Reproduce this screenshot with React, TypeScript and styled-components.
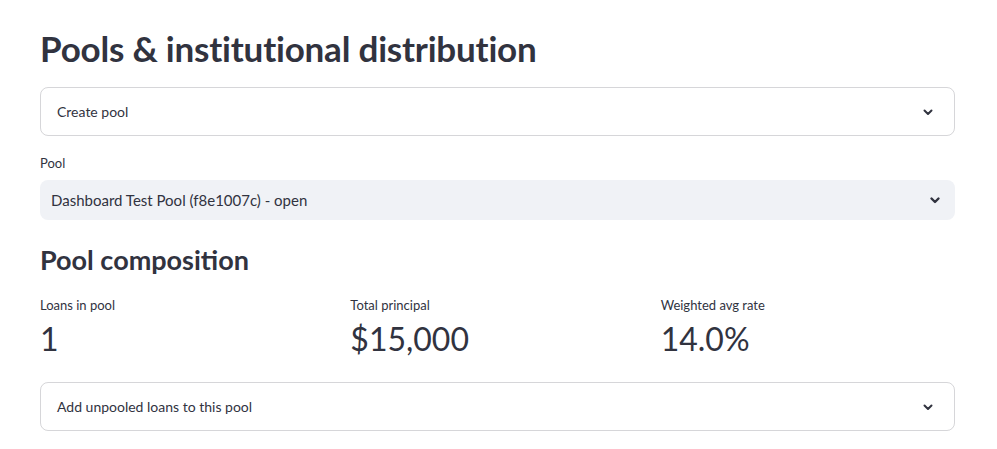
import React from 'react';
import styled, { createGlobalStyle } from 'styled-components';

const GlobalStyle = createGlobalStyle`
  body {
    margin: 0;
    background: #ffffff;
    color: #31333f;
    font-family: Lato, "Noto Sans", sans-serif;
  }
`;

const Main = styled.main`
  width: 915px;
  padding: 26px 42px 0 40px;
  display: flex;
  flex-direction: column;
`;

const Title = styled.h1`
  margin: 0 0 17px;
  font-size: 35px;
  line-height: 44px;
  font-weight: 700;
  letter-spacing: -0.2px;
`;

const Expander = styled.div<{ $gap?: number }>`
  box-sizing: border-box;
  height: 49px;
  border: 1px solid rgba(49, 51, 63, 0.2);
  border-radius: 8px;
  display: flex;
  align-items: center;
  justify-content: space-between;
  padding: 0 20px 0 16px;
  font-size: 14px;
  margin-bottom: ${({ $gap }) => $gap ?? 0}px;
`;

const Field = styled.div`
  display: flex;
  flex-direction: column;
  gap: 7px;
  margin-bottom: 22px;
`;

const Label = styled.label`
  font-size: 13px;
  line-height: 20px;
`;

const Select = styled.div`
  box-sizing: border-box;
  height: 40px;
  background: #f0f2f6;
  border-radius: 8px;
  display: flex;
  align-items: center;
  justify-content: space-between;
  padding: 0 14px 0 11px;
  font-size: 15px;
`;

const Subtitle = styled.h3`
  margin: 0 0 17px;
  font-size: 27px;
  line-height: 36px;
  font-weight: 700;
`;

const Metrics = styled.div`
  display: grid;
  grid-template-columns: repeat(3, 1fr);
  gap: 16px;
  margin-bottom: 19px;
`;

const Metric = styled.div`
  display: flex;
  flex-direction: column;
`;

const MetricLabel = styled.div`
  font-size: 13px;
  line-height: 20px;
`;

const MetricValue = styled.div`
  font-size: 32px;
  line-height: 48px;
  font-weight: 400;
`;

const Chevron = ({ size = 12, stroke = 2 }: { size?: number; stroke?: number }) => (
  <svg width={size} height={size} viewBox="0 0 12 12" fill="none">
    <path
      d="M2.5 4.5 L6 8 L9.5 4.5"
      stroke="#31333f"
      strokeWidth={stroke}
      strokeLinecap="round"
      strokeLinejoin="round"
    />
  </svg>
);

const metrics = [
  { label: 'Loans in pool', value: '1' },
  { label: 'Total principal', value: '$15,000' },
  { label: 'Weighted avg rate', value: '14.0%' },
];

const App = () => (
  <>
    <GlobalStyle />
    <Main>
      <Title>Pools &amp; institutional distribution</Title>
      <Expander $gap={17}>
        <span>Create pool</span>
        <Chevron />
      </Expander>
      <Field>
        <Label>Pool</Label>
        <Select>
          <span>Dashboard Test Pool (f8e1007c) - open</span>
          <Chevron stroke={2.4} />
        </Select>
      </Field>
      <Subtitle>Pool composition</Subtitle>
      <Metrics>
        {metrics.map(({ label, value }) => (
          <Metric key={label}>
            <MetricLabel>{label}</MetricLabel>
            <MetricValue>{value}</MetricValue>
          </Metric>
        ))}
      </Metrics>
      <Expander>
        <span>Add unpooled loans to this pool</span>
        <Chevron />
      </Expander>
    </Main>
  </>
);

export default App;
